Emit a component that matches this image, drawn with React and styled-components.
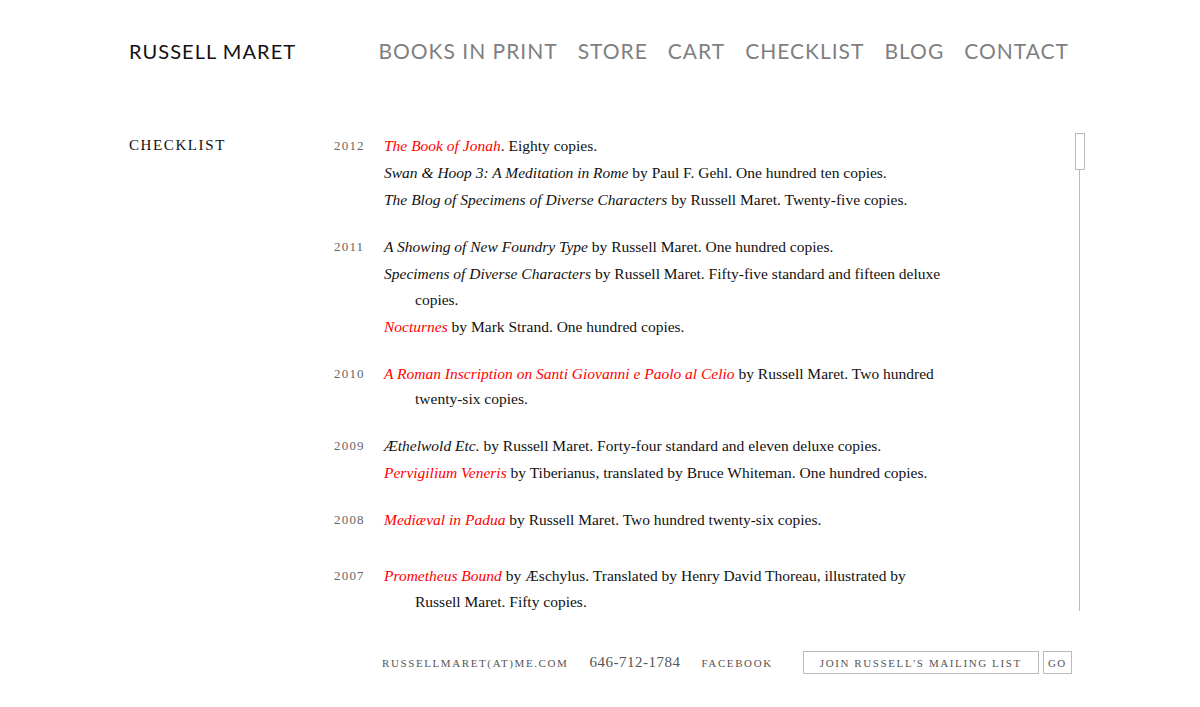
import React from "react"
import styled, { createGlobalStyle } from "styled-components"

const GlobalStyle = createGlobalStyle`
  html, body {
    margin: 0;
    padding: 0;
    background: #fff;
  }
  body {
    font-family: "Liberation Serif", "Times New Roman", serif;
    color: #111;
  }
`

const checklist = [
  {
    year: "2012",
    entries: [
      { title: "The Book of Jonah", red: true, rest: ". Eighty copies." },
      { title: "Swan & Hoop 3: A Meditation in Rome", rest: " by Paul F. Gehl. One hundred ten copies." },
      { title: "The Blog of Specimens of Diverse Characters", rest: " by Russell Maret. Twenty-five copies." },
    ],
  },
  {
    year: "2011",
    entries: [
      { title: "A Showing of New Foundry Type", rest: " by Russell Maret. One hundred copies." },
      { title: "Specimens of Diverse Characters", rest: " by Russell Maret. Fifty-five standard and fifteen deluxe copies." },
      { title: "Nocturnes", red: true, rest: " by Mark Strand. One hundred copies." },
    ],
  },
  {
    year: "2010",
    entries: [
      { title: "A Roman Inscription on Santi Giovanni e Paolo al Celio", red: true, rest: " by Russell Maret. Two hundred twenty-six copies." },
    ],
  },
  {
    year: "2009",
    entries: [
      { title: "Æthelwold Etc.", rest: " by Russell Maret. Forty-four standard and eleven deluxe copies." },
      { title: "Pervigilium Veneris", red: true, rest: " by Tiberianus, translated by Bruce Whiteman. One hundred copies." },
    ],
  },
  {
    year: "2008",
    extra: true,
    entries: [
      { title: "Mediæval in Padua", red: true, rest: " by Russell Maret. Two hundred twenty-six copies." },
    ],
  },
  {
    year: "2007",
    entries: [
      { title: "Prometheus Bound", red: true, rest: " by Æschylus. Translated by Henry David Thoreau, illustrated by Russell Maret. Fifty copies." },
    ],
  },
]

const navItems = ["BOOKS IN PRINT", "STORE", "CART", "CHECKLIST", "BLOG", "CONTACT"]

function App() {
  return (
    <>
      <GlobalStyle />
      <Page>
        <Header>
          <Logo>RUSSELL MARET</Logo>
          <Nav>
            {navItems.map(item => (
              <NavLink key={item}>{item}</NavLink>
            ))}
          </Nav>
        </Header>

        <Main>
          <Sidebar>CHECKLIST</Sidebar>
          <Content>
            {checklist.map(group => (
              <YearGroup key={group.year} $extra={group.extra}>
                <Year>{group.year}</Year>
                <Entries>
                  {group.entries.map(entry => (
                    <Entry key={entry.title}>
                      <Title $red={entry.red}>{entry.title}</Title>
                      {entry.rest}
                    </Entry>
                  ))}
                </Entries>
              </YearGroup>
            ))}
          </Content>
          <ScrollTrack>
            <Thumb />
            <TrackLine />
          </ScrollTrack>
        </Main>

        <Footer>
          <FooterLink>russellmaret(at)me.com</FooterLink>
          <Phone>646-712-1784</Phone>
          <FooterLink>facebook</FooterLink>
          <Signup>
            <MailBox>join russell's mailing list</MailBox>
            <GoButton>go</GoButton>
          </Signup>
        </Footer>
      </Page>
    </>
  )
}

export default App

const Page = styled.div`
  width: 942px;
  margin: 0 auto;
  padding-top: 38px;
`

const Header = styled.div`
  display: flex;
  justify-content: space-between;
  align-items: baseline;
  padding-right: 2px;
`

const Logo = styled.div`
  font-family: "Lato", "Liberation Sans", sans-serif;
  font-size: 20px;
  letter-spacing: 1.05px;
  color: #111;
`

const Nav = styled.div`
  display: flex;
  gap: 20px;
`

const NavLink = styled.div`
  font-family: "Lato", "Liberation Sans", sans-serif;
  font-size: 21px;
  letter-spacing: 1px;
  color: #7f7f7f;
`

const Main = styled.div`
  display: flex;
  margin-top: 70px;
  height: 486px;
`

const Sidebar = styled.div`
  width: 205px;
  flex-shrink: 0;
  font-size: 15px;
  letter-spacing: 1.6px;
  line-height: 25px;
`

const Content = styled.div`
  width: 620px;
  overflow: hidden;
`

const YearGroup = styled.div`
  display: flex;
  margin-bottom: ${props => (props.$extra ? "29px" : "20px")};
`

const Year = styled.div`
  width: 50px;
  flex-shrink: 0;
  font-size: 13px;
  letter-spacing: 1.2px;
  color: #666;
  line-height: 26px;
`

const Entries = styled.div`
  width: 562px;
`

const Entry = styled.div`
  font-size: 15.5px;
  line-height: 25.5px;
  padding-left: 31px;
  text-indent: -31px;
  margin-bottom: 1.5px;
`

const Title = styled.i`
  color: ${props => (props.$red ? "#ff0000" : "#111")};
`

const ScrollTrack = styled.div`
  margin-left: auto;
  margin-right: -14px;
  width: 11px;
  display: flex;
  flex-direction: column;
  align-items: center;
`

const Thumb = styled.div`
  width: 8px;
  height: 35px;
  border: 1px solid #bbb;
  background: #fff;
`

const TrackLine = styled.div`
  width: 1px;
  height: 441px;
  background: #bbb;
`

const Footer = styled.div`
  display: flex;
  align-items: center;
  margin-top: 32px;
  margin-left: 253px;
  margin-right: -14px;
  gap: 21px;
`

const FooterLink = styled.div`
  font-size: 11px;
  text-transform: uppercase;
  letter-spacing: 1.6px;
  color: #555;
`

const Phone = styled.div`
  font-size: 15px;
  letter-spacing: 0.5px;
  color: #555;
`

const Signup = styled.div`
  display: flex;
  gap: 4px;
  margin-left: 9px;
`

const MailBox = styled.div`
  width: 234px;
  height: 21px;
  border: 1px solid #bbb;
  font-size: 11px;
  text-transform: uppercase;
  letter-spacing: 1.6px;
  color: #555;
  display: flex;
  align-items: center;
  justify-content: center;
`

const GoButton = styled.div`
  width: 27px;
  height: 21px;
  border: 1px solid #bbb;
  font-size: 11px;
  text-transform: uppercase;
  letter-spacing: 1.2px;
  color: #555;
  display: flex;
  align-items: center;
  justify-content: center;
`
